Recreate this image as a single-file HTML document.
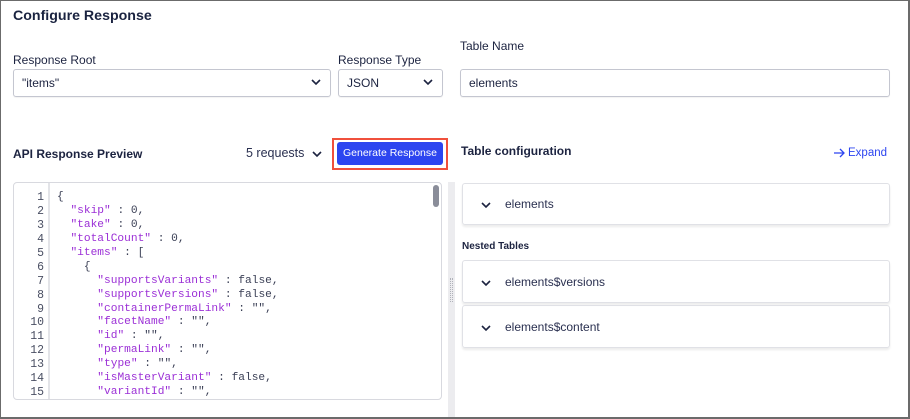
<!DOCTYPE html>
<html><head><style>
*{box-sizing:border-box;margin:0;padding:0}
body{width:910px;height:419px;overflow:hidden;background:#fff;font-family:"Liberation Sans",sans-serif;color:#1c2340;position:relative}
.frame{position:absolute;left:0;top:0;width:910px;height:419px;border:1px solid #6b6b6b;border-right:2px solid #6b6b6b;border-bottom:2px solid #6b6b6b}
.abs{position:absolute}
.h1{left:13px;top:8px;font-size:14.2px;font-weight:bold;color:#1a2340}
.lbl{font-size:12px;color:#1c2340}
.inp{border:1px solid #c4c6d0;border-radius:3px;height:28px;font-size:12px;padding:0 8px;line-height:26px;color:#1c2340;box-shadow:0 1px 1px rgba(0,0,0,.05)}
.chev{position:absolute;right:9px;top:8px}
.code{left:13px;top:182px;width:429px;height:218px;border:1px solid #d8d9df;border-radius:4px;overflow:hidden}
.gut{position:absolute;left:0;top:0;width:36px;height:100%;border-right:2px solid #e3e4e8;font-family:"Liberation Mono",monospace;font-size:11.5px;line-height:13.93px;text-align:right;padding-right:4px;padding-top:8px;color:#4a4f63}
.src{position:absolute;left:43px;top:8px;font-family:"Liberation Mono",monospace;font-size:11.2px;line-height:13.93px;white-space:pre;color:#3a3f55}
.k{color:#9b2fd6}
.card{left:462px;width:428px;border:1px solid #e0e1e6;border-radius:3px;box-shadow:0 2px 2px rgba(0,0,0,.08);font-size:12px;color:#2a3050}
.card svg{position:absolute;left:18px}
.card span{position:absolute;left:42px}
</style></head><body>
<div class="frame"></div>
<div class="abs h1">Configure Response</div>
<div class="abs lbl" style="left:13px;top:53px">Response Root</div>
<div class="abs lbl" style="left:338px;top:53px">Response Type</div>
<div class="abs lbl" style="left:460px;top:39px">Table Name</div>
<div class="abs inp" style="left:13px;top:69px;width:318px">"items"<svg class="chev" width="10" height="8" viewBox="0 0 10 8"><path d="M1 2l4 4 4-4" stroke="#1c2340" stroke-width="1.6" fill="none"/></svg></div>
<div class="abs inp" style="left:338px;top:69px;width:105px">JSON<svg class="chev" width="10" height="8" viewBox="0 0 10 8"><path d="M1 2l4 4 4-4" stroke="#1c2340" stroke-width="1.6" fill="none"/></svg></div>
<div class="abs inp" style="left:460px;top:69px;width:430px">elements</div>

<div class="abs" style="left:13px;top:147px;font-size:12px;font-weight:bold">API Response Preview</div>
<div class="abs" style="left:246px;top:146px;font-size:12.5px;color:#2a3050">5 requests</div>
<svg class="abs" style="left:312px;top:150px" width="10" height="8" viewBox="0 0 10 8"><path d="M1 2l4 4 4-4" stroke="#1c2340" stroke-width="1.6" fill="none"/></svg>
<div class="abs" style="left:332px;top:138px;width:116px;height:32px;border:2px solid #f0503c"></div>
<div class="abs" style="left:337px;top:142px;width:106px;height:23px;background:#2c45f0;border-radius:3px;color:#fff;font-size:10.5px;text-align:center;line-height:23px">Generate Response</div>

<div class="abs code">
<div class="gut">1<br>2<br>3<br>4<br>5<br>6<br>7<br>8<br>9<br>10<br>11<br>12<br>13<br>14<br>15</div>
<div class="src">{
  <span class="k">"skip"</span> : 0,
  <span class="k">"take"</span> : 0,
  <span class="k">"totalCount"</span> : 0,
  <span class="k">"items"</span> : [
    {
      <span class="k">"supportsVariants"</span> : false,
      <span class="k">"supportsVersions"</span> : false,
      <span class="k">"containerPermaLink"</span> : "",
      <span class="k">"facetName"</span> : "",
      <span class="k">"id"</span> : "",
      <span class="k">"permaLink"</span> : "",
      <span class="k">"type"</span> : "",
      <span class="k">"isMasterVariant"</span> : false,
      <span class="k">"variantId"</span> : "",</div>
<div style="position:absolute;right:2px;top:2px;width:6px;height:22px;background:#8a8d99;border-radius:3px"></div>
</div>
<div class="abs" style="left:448px;top:182px;width:7px;height:235px;background:#ececef"></div>
<div class="abs" style="left:450px;top:278px;width:3px;height:24px;border-left:1px dotted #b0b2ba;border-right:1px dotted #b0b2ba"></div>

<div class="abs" style="left:461px;top:144px;font-size:12px;font-weight:bold">Table configuration</div>
<svg class="abs" style="left:833px;top:148px" width="12" height="10" viewBox="0 0 12 10"><path d="M1 5h10M7 1l4 4-4 4" stroke="#2c45f0" stroke-width="1.3" fill="none"/></svg>
<div class="abs" style="left:848px;top:147px;font-size:11.5px;color:#2c45f0">Expand</div>

<div class="abs card" style="top:183px;height:42px"><svg style="top:17px" width="10" height="8" viewBox="0 0 10 8"><path d="M1 2l4 4 4-4" stroke="#1c2340" stroke-width="1.6" fill="none"/></svg><span style="top:13px">elements</span></div>
<div class="abs" style="left:462px;top:241px;font-size:10px;font-weight:bold">Nested Tables</div>
<div class="abs card" style="top:260px;height:43px"><svg style="top:18px" width="10" height="8" viewBox="0 0 10 8"><path d="M1 2l4 4 4-4" stroke="#1c2340" stroke-width="1.6" fill="none"/></svg><span style="top:14px">elements$versions</span></div>
<div class="abs card" style="top:305px;height:43px"><svg style="top:18px" width="10" height="8" viewBox="0 0 10 8"><path d="M1 2l4 4 4-4" stroke="#1c2340" stroke-width="1.6" fill="none"/></svg><span style="top:14px">elements$content</span></div>
</body></html>
